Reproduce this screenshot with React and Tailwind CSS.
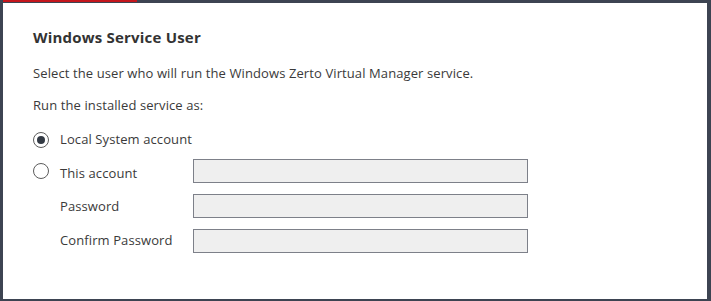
const inputBox = "h-[24px] w-[335px] border border-[#7d8089] bg-[#efefef]";

const Radio = ({ checked }) => (
    <span className="flex h-[16px] w-[16px] shrink-0 items-center justify-center rounded-full border border-[#5c5c5c] bg-white">
        {checked && <span className="h-[8px] w-[8px] rounded-full bg-[#333a44]" />}
    </span>
);

const App = () => {
    return (
        <div
            className="flex h-[301px] w-[711px] flex-col bg-[#3d4452] pb-[2px] pl-[3px] pr-[4px] text-[#3a3a3a]"
            style={{ fontFamily: '"Open Sans", "Noto Sans", sans-serif' }}
        >
            {/* top strip with the red accent */}
            <div className="h-[3px] shrink-0">
                <div className="h-[2px] w-[134px] bg-[#c4161c]" />
            </div>

            <div className="flex-1 bg-white pl-[30px] pt-[24px]">
                <h2 className="text-[15px] font-bold leading-[20px] tracking-[0.2px] text-[#333333]">
                    Windows Service User
                </h2>
                <p className="mt-[17px] text-[13px] leading-[18px] tracking-[0.1px]">
                    Select the user who will run the Windows Zerto Virtual Manager service.
                </p>
                <p className="mt-[14px] text-[13px] leading-[18px] tracking-[0.1px]">
                    Run the installed service as:
                </p>

                <div className="mt-[14px] flex flex-col text-[13px] tracking-[0.1px]">
                    <label className="flex h-[24px] items-center">
                        <Radio checked />
                        <span className="ml-[11px]">Local System account</span>
                    </label>

                    <div className="mt-[7px] flex h-[24px] items-center">
                        <label className="flex w-[160px] items-center">
                            <Radio />
                            <span className="ml-[11px] pt-[6px]">This account</span>
                        </label>
                        <div className={inputBox} />
                    </div>

                    <div className="mt-[11px] flex h-[24px] items-center">
                        <span className="w-[160px] pl-[27px] pt-[1px]">Password</span>
                        <div className={inputBox} />
                    </div>

                    <div className="mt-[11px] flex h-[24px] items-center">
                        <span className="w-[160px] pl-[27px]">Confirm Password</span>
                        <div className={inputBox} />
                    </div>
                </div>
            </div>
        </div>
    );
};

export default App;
